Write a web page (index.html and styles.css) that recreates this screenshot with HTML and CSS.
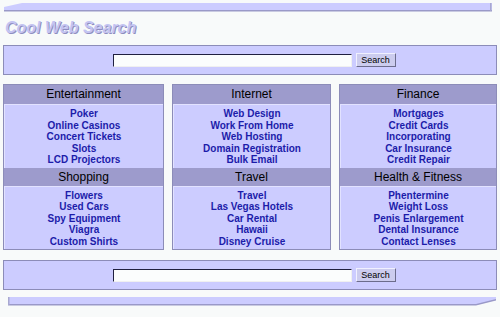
FILE: index.html
```html
<!DOCTYPE html>
<html lang="en">
<head>
    <meta charset="UTF-8">
    <meta name="viewport" content="width=device-width, initial-scale=1.0">
    <title>Cool Web Search</title>
    <link rel="stylesheet" href="styles.css">
</head>
<body>
    <svg class="bar bar-top" width="488" height="9" viewBox="0 0 488 9">
        <polygon points="0,4 18,0 488,0 488,8 0,8" fill="#ccccff"/>
        <rect x="0" y="7" width="488" height="1.5" fill="#9a99c8"/>
        <rect x="486" y="0" width="1.5" height="8" fill="#a8a8d0"/>
    </svg>

    <h1 class="logo">Cool Web Search</h1>

    <form class="search-box">
        <input type="text" class="search-input">
        <button type="button" class="search-button">Search</button>
    </form>

    <div class="categories">
        <div class="category">
            <h2>Entertainment</h2>
            <ul>
                <li><a href="#">Poker</a></li>
                <li><a href="#">Online Casinos</a></li>
                <li><a href="#">Concert Tickets</a></li>
                <li><a href="#">Slots</a></li>
                <li><a href="#">LCD Projectors</a></li>
            </ul>
            <h2>Shopping</h2>
            <ul>
                <li><a href="#">Flowers</a></li>
                <li><a href="#">Used Cars</a></li>
                <li><a href="#">Spy Equipment</a></li>
                <li><a href="#">Viagra</a></li>
                <li><a href="#">Custom Shirts</a></li>
            </ul>
        </div>
        <div class="category">
            <h2>Internet</h2>
            <ul>
                <li><a href="#">Web Design</a></li>
                <li><a href="#">Work From Home</a></li>
                <li><a href="#">Web Hosting</a></li>
                <li><a href="#">Domain Registration</a></li>
                <li><a href="#">Bulk Email</a></li>
            </ul>
            <h2>Travel</h2>
            <ul>
                <li><a href="#">Travel</a></li>
                <li><a href="#">Las Vegas Hotels</a></li>
                <li><a href="#">Car Rental</a></li>
                <li><a href="#">Hawaii</a></li>
                <li><a href="#">Disney Cruise</a></li>
            </ul>
        </div>
        <div class="category">
            <h2>Finance</h2>
            <ul>
                <li><a href="#">Mortgages</a></li>
                <li><a href="#">Credit Cards</a></li>
                <li><a href="#">Incorporating</a></li>
                <li><a href="#">Car Insurance</a></li>
                <li><a href="#">Credit Repair</a></li>
            </ul>
            <h2>Health &amp; Fitness</h2>
            <ul>
                <li><a href="#">Phentermine</a></li>
                <li><a href="#">Weight Loss</a></li>
                <li><a href="#">Penis Enlargement</a></li>
                <li><a href="#">Dental Insurance</a></li>
                <li><a href="#">Contact Lenses</a></li>
            </ul>
        </div>
    </div>

    <form class="search-box search-bottom">
        <input type="text" class="search-input">
        <button type="button" class="search-button">Search</button>
    </form>

    <svg class="bar bar-bottom" width="488" height="9" viewBox="0 0 488 9">
        <polygon points="0,0 488,0 488,3 468,8 0,8" fill="#ccccff"/>
        <polygon points="0,7 468,7 488,2 488,3.5 468,8.5 0,8.5" fill="#9a99c8"/>
        <rect x="0" y="0" width="1.5" height="8" fill="#a8a8d0"/>
    </svg>
</body>
</html>
```

FILE: styles.css
```css
:root {
    --light: #ccccff;
    --dark: #9d9bcc;
    --edge: #8c8cb8;
    --link: #1c1caa;
    --page: #f8fafa;
}

body {
    margin: 0;
    padding: 3px 3px 0 3px;
    background: var(--page);
    font-family: 'Liberation Sans', Arial, sans-serif;
}

.bar {
    display: block;
}

.bar-top {
    margin-left: 1px;
}

.bar-bottom {
    margin: 7px 0 0 5px;
}

.logo {
    margin: 6px 0 0 2px;
    height: 27px;
    font-size: 16px;
    line-height: 20px;
    font-style: italic;
    font-weight: bold;
    color: #c4c4f2;
    text-shadow: 1px 1px 0 #8f8ec0;
}

.search-box {
    display: flex;
    justify-content: center;
    align-items: center;
    gap: 4px;
    height: 28px;
    margin: 0;
    padding-left: 8px;
    background: var(--light);
    border: 1px solid var(--edge);
}

.search-input {
    width: 239px;
    height: 13px;
    box-sizing: border-box;
    padding: 0;
    background: #fbfdfd;
    border: 1px solid #f0f0f0;
    border-top-color: #202040;
    border-left-color: #202040;
}

.search-button {
    width: 40px;
    height: 14px;
    box-sizing: border-box;
    padding: 0;
    font-family: 'Liberation Sans', Arial, sans-serif;
    font-size: 9px;
    color: #000;
    background: #ccccee;
    border: 1px solid #6c6c8c;
    border-top-color: #f0f0ff;
    border-left-color: #f0f0ff;
}

.categories {
    display: grid;
    grid-template-columns: 161px 159px 158px;
    column-gap: 8px;
    margin-top: 9px;
}

.category {
    border: 1px solid var(--edge);
    background: var(--light);
}

.category h2 {
    margin: 0;
    height: 19px;
    line-height: 19px;
    background: var(--dark);
    font-size: 12px;
    font-weight: normal;
    text-align: center;
    color: #000;
}

.category ul + h2 {
    height: 18px;
    line-height: 18px;
}

.category ul {
    margin: 0;
    padding: 3px 0 2px;
    list-style: none;
    text-align: center;
    border-top: 1px solid #e2e2ff;
    border-left: 1px solid #e2e2ff;
}

.category li {
    font-size: 10px;
    line-height: 11.5px;
    font-weight: bold;
}

.category a {
    color: var(--link);
    text-decoration: none;
}

.search-bottom {
    margin-top: 10px;
}
```
